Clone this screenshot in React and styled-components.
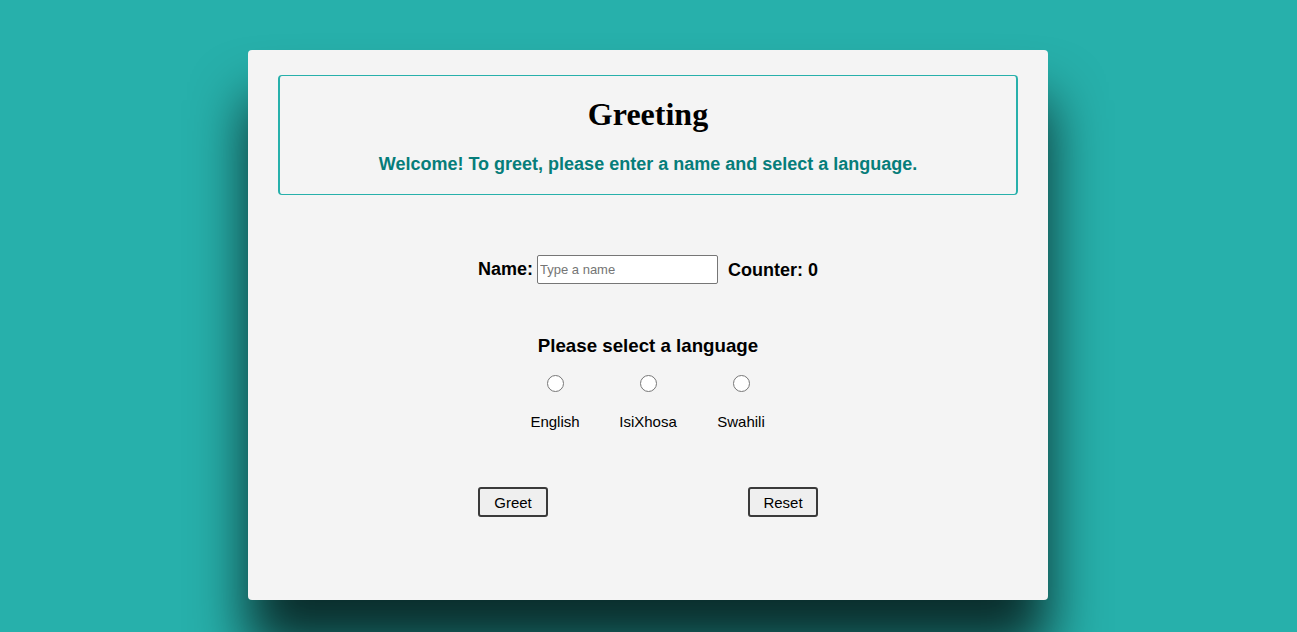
import React, { useState } from "react"
import styled, { createGlobalStyle } from "styled-components"

const GlobalStyle = createGlobalStyle`
  html, body {
    margin: 0;
    padding: 0;
  }
  body {
    background: #27b0ab;
    font-family: "Liberation Sans", Arial, sans-serif;
    min-height: 632px;
    overflow: hidden;
  }
`

const Page = styled.div`
  display: flex;
  justify-content: center;
  padding: 50px 1px 0 0;
  min-height: 632px;
  box-sizing: border-box;
`

const Card = styled.div`
  width: 800px;
  height: 550px;
  flex-shrink: 0;
  background: #f4f4f4;
  border-radius: 4px;
  box-shadow: 0 50px 55px rgba(0, 0, 0, 0.75);
  padding: 25px 30px 0;
  box-sizing: border-box;
  display: flex;
  flex-direction: column;
  align-items: center;
`

const Banner = styled.header`
  width: 740px;
  box-sizing: border-box;
  border: 1px solid #27b0ab;
  border-left-width: 2px;
  border-right-width: 2px;
  border-radius: 4px;
  padding: 20px 0 19px;
  display: flex;
  flex-direction: column;
  align-items: center;
  gap: 21px;

  h1 {
    margin: 0;
    font-family: "Liberation Serif", "Times New Roman", serif;
    font-size: 32px;
    line-height: 37px;
    color: #000;
  }

  p {
    margin: 0;
    font-size: 18px;
    line-height: 21px;
    font-weight: bold;
    color: #067d7a;
  }
`

const NameRow = styled.div`
  margin-top: 60px;
  display: flex;
  align-items: center;
  white-space: nowrap;
`

const Label = styled.label`
  flex-shrink: 0;
  font-size: 18px;
  font-weight: bold;
  color: #000;
  margin-right: ${(p) => p.gap || 0}px;
  margin-left: ${(p) => p.lead || 0}px;
  padding-top: ${(p) => p.drop || 0}px;
  padding-bottom: ${(p) => p.lift || 0}px;
`

const NameInput = styled.input`
  flex-shrink: 0;
  width: 181px;
  height: 29px;
  box-sizing: border-box;
  border: 1px solid #767676;
  border-radius: 2px;
  padding: 1px 2px;
  font-family: "Liberation Sans", Arial, sans-serif;
  font-size: 13px;
  background: #fff;
  &::placeholder {
    color: #757575;
  }
`

const LangTitle = styled.h3`
  margin: 51px 0 0;
  font-size: 18.72px;
  line-height: 22px;
  font-weight: bold;
  color: #000;
`

const Options = styled.div`
  display: flex;
  margin-top: 18px;
`

const Option = styled.label`
  width: 93px;
  display: flex;
  flex-direction: column;
  align-items: center;
  gap: 21px;
  font-size: 15px;
  color: #000;

  input {
    margin: 0;
    width: 17px;
    height: 17px;
    accent-color: #444;
  }
`

const Buttons = styled.div`
  width: 340px;
  display: flex;
  justify-content: space-between;
  margin-top: 57px;
`

const Button = styled.button`
  width: 70px;
  height: 30px;
  font-family: "Liberation Sans", Arial, sans-serif;
  font-size: 15px;
  color: #000;
  background: #efefef;
  border: 2px solid #3a3a3a;
  border-radius: 3px;
  padding: 0;
  cursor: pointer;
`

const languages = ["English", "IsiXhosa", "Swahili"]

const App = () => {
  const [lang, setLang] = useState("")
  return (
    <>
      <GlobalStyle />
      <Page>
        <Card>
          <Banner>
            <h1>Greeting</h1>
            <p>Welcome! To greet, please enter a name and select a language.</p>
          </Banner>
          <NameRow>
            <Label gap={4} lift={1}>Name:</Label>
            <NameInput placeholder="Type a name" />
            <Label lead={10} drop={2}>Counter: 0</Label>
          </NameRow>
          <LangTitle>Please select a language</LangTitle>
          <Options>
            {languages.map((l) => (
              <Option key={l}>
                <input
                  type="radio"
                  name="lang"
                  checked={lang === l}
                  onChange={() => setLang(l)}
                />
                {l}
              </Option>
            ))}
          </Options>
          <Buttons>
            <Button>Greet</Button>
            <Button>Reset</Button>
          </Buttons>
        </Card>
      </Page>
    </>
  )
}

export default App
